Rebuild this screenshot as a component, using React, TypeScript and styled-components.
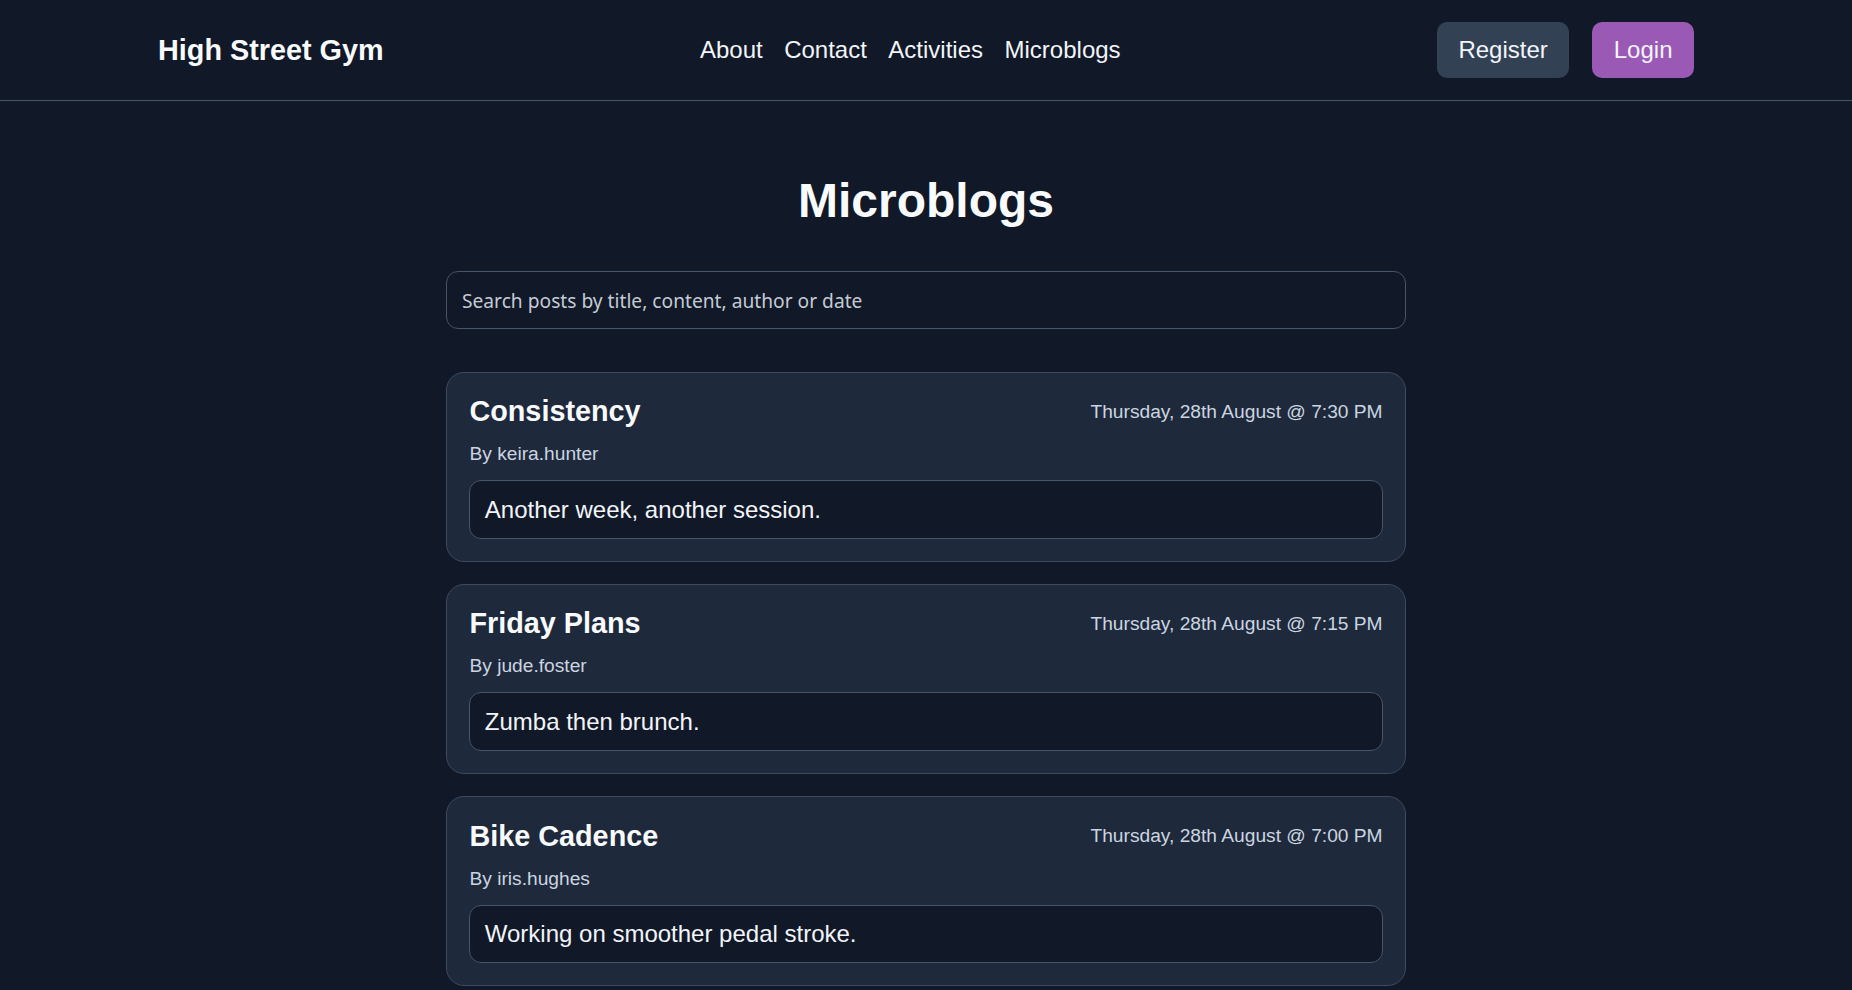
import React, { useState } from 'react'
import styled, { createGlobalStyle } from 'styled-components'

interface Post {
  id: number
  title: string
  author: string
  date: string
  content: string
}

const posts: Post[] = [
  { id: 1, title: 'Consistency', author: 'keira.hunter', date: 'Thursday, 28th August @ 7:30 PM', content: 'Another week, another session.' },
  { id: 2, title: 'Friday Plans', author: 'jude.foster', date: 'Thursday, 28th August @ 7:15 PM', content: 'Zumba then brunch.' },
  { id: 3, title: 'Bike Cadence', author: 'iris.hughes', date: 'Thursday, 28th August @ 7:00 PM', content: 'Working on smoother pedal stroke.' },
]

const App: React.FC = () => {
  const [query, setQuery] = useState('')

  const filtered = posts.filter((p) => {
    const q = query.toLowerCase()
    return [p.title, p.content, p.author, p.date].some((v) => v.toLowerCase().includes(q))
  })

  return (
    <>
      <GlobalStyle />
      <Header>
        <HeaderInner>
          <Logo>High Street Gym</Logo>
          <Nav>
            <NavLink href="#">About</NavLink>
            <NavLink href="#">Contact</NavLink>
            <NavLink href="#">Activities</NavLink>
            <NavLink href="#">Microblogs</NavLink>
          </Nav>
          <Actions>
            <HeaderButton>Register</HeaderButton>
            <HeaderButton primary>Login</HeaderButton>
          </Actions>
        </HeaderInner>
      </Header>
      <Main>
        <Title>Microblogs</Title>
        <Search
          type="text"
          value={query}
          onChange={(e) => setQuery(e.target.value)}
          placeholder="Search posts by title, content, author or date"
        />
        <PostList>
          {filtered.map((post) => (
            <Card key={post.id}>
              <CardTop>
                <PostTitle>{post.title}</PostTitle>
                <PostDate>{post.date}</PostDate>
              </CardTop>
              <Author>By {post.author}</Author>
              <Content>{post.content}</Content>
            </Card>
          ))}
        </PostList>
      </Main>
    </>
  )
}

export default App

const GlobalStyle = createGlobalStyle`
  * {
    box-sizing: border-box;
  }
  body {
    margin: 0;
    background: #111827;
    color: #f1f5f9;
    font-family: "Liberation Sans", Arial, sans-serif;
  }
`

const Header = styled.header`
  border-bottom: 1px solid #475569;
`
const HeaderInner = styled.div`
  max-width: 1536px;
  height: 100px;
  margin: 0 auto;
  display: flex;
  align-items: center;
  justify-content: space-between;
`
const Logo = styled.div`
  font-size: 28.8px;
  font-weight: 700;
  color: #f8fafc;
`
const Nav = styled.nav`
  display: flex;
  gap: 21.5px;
`
const NavLink = styled.a`
  font-size: 24px;
  color: #f1f5f9;
  text-decoration: none;
`
const Actions = styled.div`
  display: flex;
  gap: 23px;
`
const HeaderButton = styled.button<{ primary?: boolean }>`
  height: 56px;
  padding: 0 21.5px;
  border: none;
  border-radius: 10px;
  background: ${(p) => (p.primary ? '#9b59b6' : '#334155')};
  color: #f1f5f9;
  font-family: "Liberation Sans", Arial, sans-serif;
  font-size: 24px;
  cursor: pointer;
`
const Main = styled.main`
  width: 960px;
  margin: 0 auto;
  padding-top: 72px;
  display: flex;
  flex-direction: column;
`
const Title = styled.h1`
  margin: 0 0 43px;
  text-align: center;
  font-size: 48px;
  font-weight: 700;
  color: #f8fafc;
`
const Search = styled.input`
  height: 58px;
  padding: 0 15px;
  border: 1px solid #475569;
  border-radius: 12px;
  background: #111827;
  color: #e2e8f0;
  font-family: "Noto Sans", sans-serif;
  font-size: 19.2px;
  outline: none;
  &::placeholder {
    color: #c4cbd5;
  }
`
const PostList = styled.div`
  margin-top: 43px;
  display: flex;
  flex-direction: column;
  gap: 22.5px;
`
const Card = styled.article`
  padding: 22.4px 22.4px 21.4px;
  border: 1px solid #3d4b5f;
  border-radius: 18px;
  background: #1e293b;
  display: flex;
  flex-direction: column;
  gap: 15px;
`
const CardTop = styled.div`
  display: flex;
  align-items: center;
  justify-content: space-between;
`
const PostTitle = styled.h2`
  margin: 0;
  font-size: 28.8px;
  font-weight: 700;
  color: #f8fafc;
`
const PostDate = styled.span`
  font-size: 19.2px;
  color: #cbd5e1;
`
const Author = styled.div`
  font-size: 19.2px;
  color: #cbd5e1;
`
const Content = styled.div`
  padding: 14.4px;
  border: 1px solid #475569;
  border-radius: 12px;
  background: #111827;
  font-size: 24px;
  color: #f1f5f9;
`
